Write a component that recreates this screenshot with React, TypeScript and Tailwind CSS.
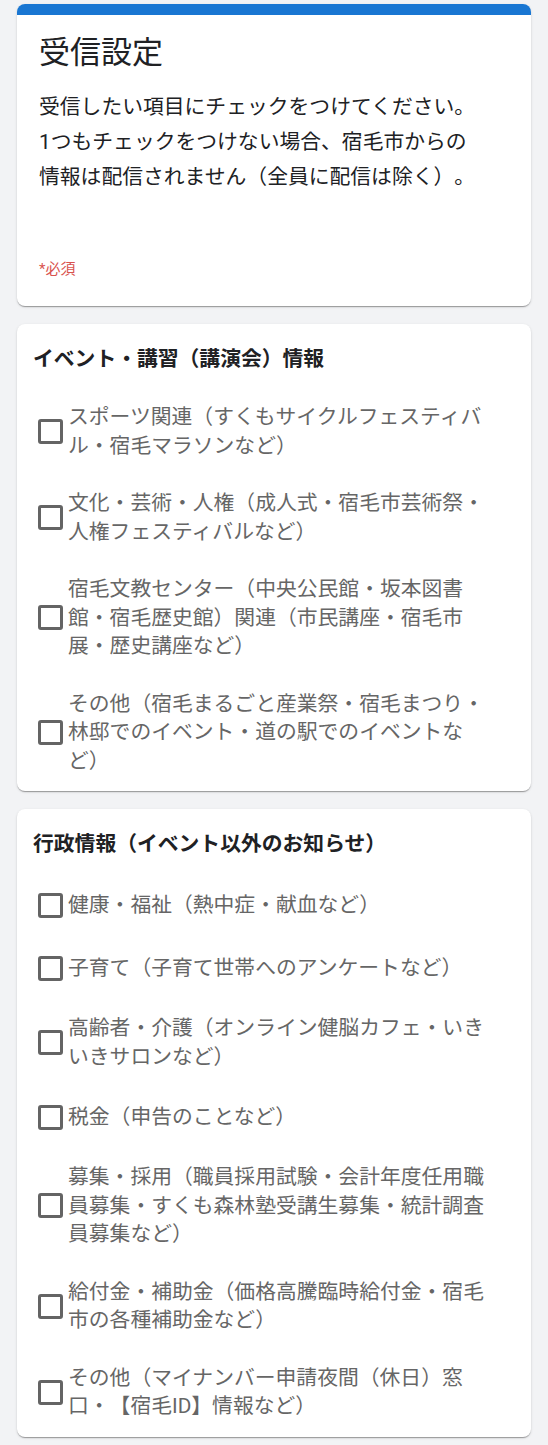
const cardShadow =
  "shadow-[0_2px_1px_-1px_rgba(0,0,0,0.2),0_1px_1px_0_rgba(0,0,0,0.14),0_1px_3px_0_rgba(0,0,0,0.12)]";

type Section = { title: string; items: string[] };

const sections: Section[] = [
  {
    title: "イベント・講習（講演会）情報",
    items: [
      "スポーツ関連（すくもサイクルフェスティバル・宿毛マラソンなど）",
      "文化・芸術・人権（成人式・宿毛市芸術祭・人権フェスティバルなど）",
      "宿毛文教センター（中央公民館・坂本図書館・宿毛歴史館）関連（市民講座・宿毛市展・歴史講座など）",
      "その他（宿毛まるごと産業祭・宿毛まつり・林邸でのイベント・道の駅でのイベントなど）",
    ],
  },
  {
    title: "行政情報（イベント以外のお知らせ）",
    items: [
      "健康・福祉（熱中症・献血など）",
      "子育て（子育て世帯へのアンケートなど）",
      "高齢者・介護（オンライン健脳カフェ・いきいきサロンなど）",
      "税金（申告のことなど）",
      "募集・採用（職員採用試験・会計年度任用職員募集・すくも森林塾受講生募集・統計調査員募集など）",
      "給付金・補助金（価格高騰臨時給付金・宿毛市の各種補助金など）",
      "その他（マイナンバー申請夜間（休日）窓口・【宿毛ID】情報など）",
    ],
  },
];

function CheckRow({ label }: { label: string }) {
  return (
    <label className="flex items-center pl-[5px]">
      <span className="flex h-[34px] w-[30px] shrink-0 items-center">
        <span className="h-[25px] w-[25px] rounded-[3px] border-[3px] border-[#646464] bg-white" />
      </span>
      <span className="w-[428px] text-[20.8px] leading-[28.5px] text-[#666666]">{label}</span>
    </label>
  );
}

export default function App() {
  return (
    <div className="min-h-[1445px] bg-[#f2f3f5] px-[17px] pt-1 font-['Roboto','Noto_Sans_CJK_JP',sans-serif] [text-spacing-trim:space-all]">
      <div className={`overflow-hidden rounded-lg bg-white ${cardShadow}`}>
        <div className="h-[11px] bg-[#1976d2]" />
        <div className="px-[22px] pt-[18px] pb-[26px]">
          <h1 className="text-[31px] leading-[39px] text-[#202124]">受信設定</h1>
          <p className="mt-[18px] w-[442px] text-[20.8px] leading-[35px] text-[#202124]">
            受信したい項目にチェックをつけてください。
            <br />
            1つもチェックをつけない場合、宿毛市からの情報は配信されません（全員に配信は除く）。
          </p>
          <p className="mt-[63px] text-[15px] leading-[22px] text-[#d9534f]">*必須</p>
        </div>
      </div>

      {sections.map((s) => (
        <div key={s.title} className={`mt-[18px] rounded-lg bg-white px-4 pt-5 pb-4 ${cardShadow}`}>
          <h2 className="text-[20.8px] font-bold leading-[30px] text-[#202124]">{s.title}</h2>
          <div className="mt-[29px] flex flex-col gap-[29px]">
            {s.items.map((it) => (
              <CheckRow key={it} label={it} />
            ))}
          </div>
        </div>
      ))}
    </div>
  );
}
